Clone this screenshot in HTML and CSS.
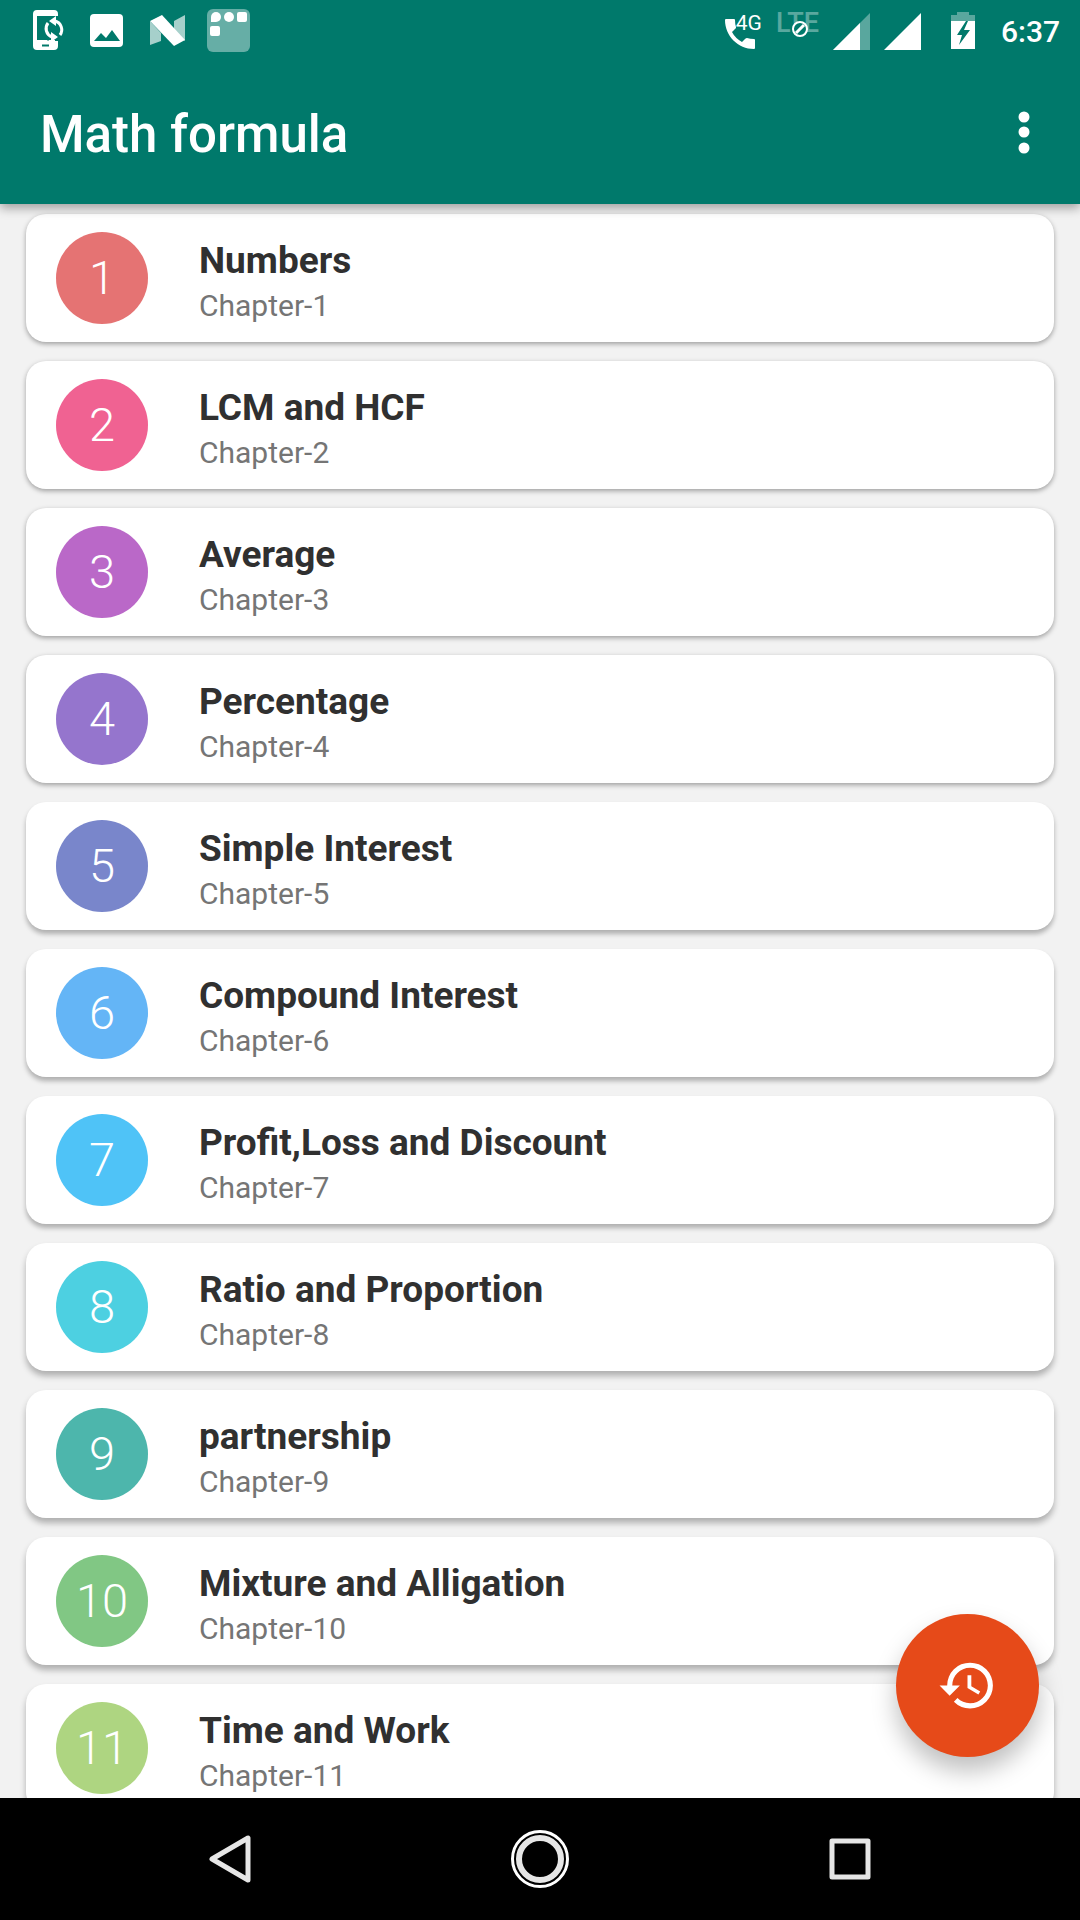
FILE: index.html
```html
<!DOCTYPE html>
<html lang="en">
<head>
  <meta charset="UTF-8">
  <meta name="viewport" content="width=device-width, initial-scale=1.0">
  <title>Math formula</title>
  <link rel="stylesheet" href="styles.css">
</head>
<body>
  <!-- Status bar -->
  <div class="status-bar">
    <div class="status-left">
      <svg width="44" height="60" viewBox="0 0 44 60" fill="none">
        <path d="M32 16v-2a4 4 0 0 0-4-4H11a4 4 0 0 0-4 4v32a4 4 0 0 0 4 4h17a4 4 0 0 0 4-4v-5h-3v-1H11V16z" fill="#fff"/>
        <path d="M16 45.500h7" stroke="#00796b" stroke-width="2"/>
        <path d="M24 38a9 9 0 0 1-2-14M29 21a9 9 0 0 1 5 15" stroke="#00796b" stroke-width="7"/>
        <path d="M26 37a9 9 0 0 1-4-14M29 21a9 9 0 0 1 5 14" stroke="#fff" stroke-width="3"/>
        <path d="M30 16v10l-7-5zM25 32v10l7-5z" fill="#fff"/>
      </svg>
      <svg width="44" height="60" viewBox="0 0 44 60">
        <rect x="4" y="14" width="33" height="33" rx="4" fill="#fff"/>
        <path d="M8 41l7-8 5 5 6-8 8 11z" fill="#00796b"/>
      </svg>
      <svg width="44" height="60" viewBox="0 0 44 60">
        <path d="M4 21l11 12v8L4 45zM28 21l11-6v26L28 30z" fill="#fff" opacity=".65"/>
        <path d="M4 21l12-6 23 25-11 6z" fill="#fff"/>
      </svg>
      <svg width="44" height="60" viewBox="0 0 44 60" fill="#fff">
        <rect x="1" y="9" width="43" height="43" rx="6" opacity=".4"/>
        <path d="M5 22v-5a5 5 0 1 1 5 5z"/>
        <circle cx="23" cy="17" r="5"/>
        <rect x="31" y="12" width="10" height="10" rx="2"/>
        <rect x="4" y="26" width="10" height="10" rx="2"/>
      </svg>
    </div>
    <div class="status-right">
      <div class="call-icon">
        <svg width="38" height="60" viewBox="0 0 38 60" fill="#fff">
          <path d="M2 19h8a1 1 0 0 1 1 1q0 4 1 7c0 1 0 1-1 2l-3 3q3 6 10 10l3-3q1-1 2-1 3 1 7 1a1 1 0 0 1 1 1v8a1 1 0 0 1-1 1C14 49 1 36 1 20a1 1 0 0 1 1-1z"/>
        </svg>
        <span class="call-type">4G</span>
      </div>
      <div class="lte">
        <span class="lte-text">LTE</span>
        <svg class="lte-off" width="20" height="20" viewBox="0 0 20 20">
          <circle cx="10" cy="10" r="7" fill="#00796b" stroke="#fff" stroke-width="2"/>
          <path d="M6 14l8-8" stroke="#fff" stroke-width="3"/>
        </svg>
      </div>
      <svg width="37" height="60" viewBox="0 0 37 60" fill="#fff">
        <path d="M0 50L37 13v37z" opacity=".35"/>
        <path d="M0 50l27-27v27z"/>
      </svg>
      <svg width="37" height="60" viewBox="0 0 37 60" fill="#fff">
        <path d="M0 50L37 13v37z"/>
      </svg>
      <svg width="52" height="60" viewBox="0 0 52 60" fill="#fff">
        <path d="M16 21v-6h6v-3h12v3h6v6z" opacity=".35"/>
        <path d="M16 21h24v28H16z"/>
        <path d="M31 21l-9 14h5l-3 10 11-15h-6l4-9z" fill="#00796b"/>
      </svg>
      <span class="clock">6:37</span>
    </div>
  </div>

  <!-- App bar -->
  <header class="app-bar">
    <h1>Math formula</h1>
    <button class="menu-button" aria-label="More options">
      <svg width="60" height="60" viewBox="0 0 60 60" fill="#fff">
        <circle cx="30" cy="15" r="5.500"/>
        <circle cx="30" cy="30" r="5.500"/>
        <circle cx="30" cy="46" r="5.500"/>
      </svg>
    </button>
  </header>

  <!-- Chapters -->
  <main class="content">
    <div class="chapters">
      <a class="card" href="#chapter-1">
        <span class="number red">1</span>
        <span class="text"><span class="title">Numbers</span><span class="subtitle">Chapter-1</span></span>
      </a>
      <a class="card" href="#chapter-2">
        <span class="number pink">2</span>
        <span class="text"><span class="title">LCM and HCF</span><span class="subtitle">Chapter-2</span></span>
      </a>
      <a class="card" href="#chapter-3">
        <span class="number purple">3</span>
        <span class="text"><span class="title">Average</span><span class="subtitle">Chapter-3</span></span>
      </a>
      <a class="card" href="#chapter-4">
        <span class="number deep-purple">4</span>
        <span class="text"><span class="title">Percentage</span><span class="subtitle">Chapter-4</span></span>
      </a>
      <a class="card mid" href="#chapter-5">
        <span class="number indigo">5</span>
        <span class="text"><span class="title">Simple Interest</span><span class="subtitle">Chapter-5</span></span>
      </a>
      <a class="card mid" href="#chapter-6">
        <span class="number blue">6</span>
        <span class="text"><span class="title">Compound Interest</span><span class="subtitle">Chapter-6</span></span>
      </a>
      <a class="card mid" href="#chapter-7">
        <span class="number light-blue">7</span>
        <span class="text"><span class="title">Profit,Loss and Discount</span><span class="subtitle">Chapter-7</span></span>
      </a>
      <a class="card low" href="#chapter-8">
        <span class="number cyan">8</span>
        <span class="text"><span class="title">Ratio and Proportion</span><span class="subtitle">Chapter-8</span></span>
      </a>
      <a class="card low" href="#chapter-9">
        <span class="number teal">9</span>
        <span class="text"><span class="title">partnership</span><span class="subtitle">Chapter-9</span></span>
      </a>
      <a class="card low" href="#chapter-10">
        <span class="number green">10</span>
        <span class="text"><span class="title">Mixture and Alligation</span><span class="subtitle">Chapter-10</span></span>
      </a>
      <a class="card low" href="#chapter-11">
        <span class="number light-green">11</span>
        <span class="text"><span class="title">Time and Work</span><span class="subtitle">Chapter-11</span></span>
      </a>
    </div>
    <button class="fab" aria-label="History">
      <svg width="61" height="61" viewBox="0 0 24 24" fill="#fff">
        <path d="M13 3a9 9 0 0 0-9 9H1l3.890 3.890.070.140L9 12H6c0-3.870 3.130-7 7-7s7 3.130 7 7-3.130 7-7 7c-1.930 0-3.680-.790-4.940-2.060l-1.420 1.420A8.954 8.954 0 0 0 13 21a9 9 0 0 0 0-18zm-1 5v5l4.280 2.540.720-1.210-3.500-2.080V8z"/>
      </svg>
    </button>
  </main>

  <!-- Navigation bar -->
  <nav class="nav-bar">
    <button class="nav-button" aria-label="Back">
      <svg width="60" height="60" viewBox="0 0 60 60" fill="none" stroke="#e6e6e6" stroke-width="5" stroke-linejoin="round">
        <path d="M12 30l36-21v42z"/>
      </svg>
    </button>
    <button class="nav-button" aria-label="Home">
      <svg width="60" height="60" viewBox="0 0 60 60" fill="none">
        <circle cx="30" cy="30" r="27.500" stroke="#fff" stroke-width="3"/>
        <circle cx="30" cy="30" r="21" stroke="#e6e6e6" stroke-width="6"/>
      </svg>
    </button>
    <button class="nav-button" aria-label="Recent apps">
      <svg width="60" height="60" viewBox="0 0 60 60" fill="none" stroke="#e6e6e6" stroke-width="5" stroke-linejoin="round">
        <path d="M12 12h36v36H12z"/>
      </svg>
    </button>
  </nav>
</body>
</html>
```

FILE: styles.css
```css
* {
  box-sizing: border-box;
}

body {
  margin: 0;
  height: 100vh;
  display: flex;
  flex-direction: column;
  background-color: #f2f2f2;
  font-family: Roboto, sans-serif;
}

svg {
  display: block;
}

button {
  margin: 0;
  padding: 0;
  border: none;
  background: none;
  cursor: pointer;
}

/* Status bar */
.status-bar {
  position: relative;
  z-index: 2;
  display: flex;
  justify-content: space-between;
  padding: 0 20px 0 26px;
  height: 60px;
  background-color: #00796b;
  color: #fff;
}

.status-left {
  display: flex;
  gap: 16px;
}

.status-right {
  display: flex;
  gap: 14px;
}

.call-icon,
.lte {
  position: relative;
}

.call-type {
  position: absolute;
  top: 12px;
  right: 0;
  font-size: 21px;
  line-height: 22px;
}

.lte-text {
  font-size: 27px;
  font-weight: 500;
  line-height: 46px;
  opacity: 0.35;
}

.lte-off {
  position: absolute;
  top: 19px;
  left: 14px;
}

.clock {
  font-size: 30px;
  font-weight: 500;
  line-height: 64px;
}

/* App bar */
.app-bar {
  position: relative;
  z-index: 1;
  display: flex;
  justify-content: space-between;
  align-items: center;
  padding: 0 26px 0 40px;
  height: 144px;
  background-color: #00796b;
  box-shadow: 0 4px 10px rgba(0, 0, 0, 0.35);
}

.app-bar h1 {
  margin: 0;
  padding-top: 4px;
  color: #fff;
  font-size: 51px;
  font-weight: 500;
}

/* Chapters */
.content {
  position: relative;
  flex: 1;
  min-height: 0;
}

.chapters {
  display: flex;
  flex-direction: column;
  gap: 19px;
  height: 100%;
  padding: 10px 26px;
  overflow-y: auto;
  scrollbar-width: none;
}

.card {
  display: flex;
  flex-shrink: 0;
  align-items: center;
  gap: 51px;
  min-height: 128px;
  padding: 0 30px;
  border-radius: 20px;
  background-color: #fff;
  box-shadow: 0 2px 5px rgba(0, 0, 0, 0.35);
  text-decoration: none;
}

.card.mid {
  box-shadow: 0 4px 5px rgba(0, 0, 0, 0.28);
}

.card.low {
  box-shadow: 0 5px 6px rgba(0, 0, 0, 0.28);
}

.number {
  display: flex;
  flex-shrink: 0;
  justify-content: center;
  align-items: center;
  width: 92px;
  height: 92px;
  padding-bottom: 2px;
  border-radius: 50%;
  color: #fff;
  font-size: 47px;
  font-weight: 300;
}

.text {
  display: flex;
  flex-direction: column;
  padding-top: 10px;
  line-height: 45px;
}

.title {
  color: #303030;
  font-size: 37px;
  font-weight: 700;
}

.subtitle {
  color: #757575;
  font-size: 30px;
}

.red { background-color: #e57373; }
.pink { background-color: #f06292; }
.purple { background-color: #ba68c8; }
.deep-purple { background-color: #9575cd; }
.indigo { background-color: #7986cb; }
.blue { background-color: #64b5f6; }
.light-blue { background-color: #4fc3f7; }
.cyan { background-color: #4dd0e1; }
.teal { background-color: #4db6ac; }
.green { background-color: #81c784; }
.light-green { background-color: #aed581; }

.fab {
  position: absolute;
  right: 41px;
  bottom: 41px;
  display: flex;
  justify-content: center;
  align-items: center;
  width: 143px;
  height: 143px;
  border-radius: 50%;
  background-color: #e64a19;
  box-shadow: 0 14px 24px rgba(0, 0, 0, 0.25);
}

/* Navigation bar */
.nav-bar {
  position: relative;
  display: flex;
  padding: 0 75px;
  height: 122px;
  background-color: #000;
}

.nav-button {
  display: flex;
  flex: 1;
  justify-content: center;
  align-items: center;
}
```
